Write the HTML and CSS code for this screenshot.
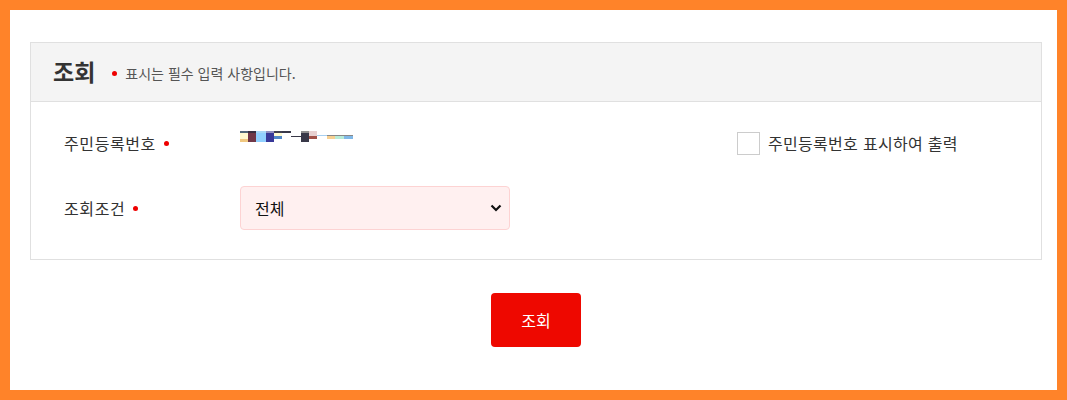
FILE: index.html
```html
<!DOCTYPE html>
<html lang="ko">
<head>
  <meta charset="UTF-8">
  <title>조회</title>
  <link rel="stylesheet" href="styles.css">
</head>
<body>
  <div class="frame">
    <div class="panel">
      <div class="panel-head">
        <h2>조회</h2>
        <span class="note"><i class="dot"></i>표시는 필수 입력 사항입니다.</span>
      </div>

      <div class="panel-body">
        <div class="row">
          <label class="label">주민등록번호<i class="dot"></i></label>
          <div class="value">
            <svg class="masked" width="113" height="11" viewBox="0 0 113 11">
              <rect x="0" y="0" width="8" height="2" fill="#506878"/>
              <rect x="0" y="2" width="8" height="6" fill="#fffbd0"/>
              <rect x="0" y="8" width="8" height="3" fill="#f0c880"/>
              <rect x="8" y="0" width="8" height="2" fill="#383040"/>
              <rect x="8" y="2" width="8" height="9" fill="#703848"/>
              <rect x="16" y="0" width="10" height="2" fill="#a8d8f8"/>
              <rect x="16" y="2" width="10" height="9" fill="#90d0ff"/>
              <rect x="26" y="0" width="8" height="2" fill="#9090c0"/>
              <rect x="26" y="2" width="8" height="9" fill="#383898"/>
              <rect x="34" y="0" width="8" height="2" fill="#404050"/>
              <rect x="34" y="2" width="8" height="3" fill="#fffad0"/>
              <rect x="34" y="5" width="8" height="3" fill="#5088c8"/>
              <rect x="42" y="0" width="9" height="2" fill="#383848"/>
              <rect x="51" y="5" width="10" height="1" fill="#383848"/>
              <rect x="61" y="0" width="8" height="2" fill="#909090"/>
              <rect x="61" y="2" width="8" height="9" fill="#383848"/>
              <rect x="69" y="0" width="8" height="5" fill="#e8d0d0"/>
              <rect x="69" y="5" width="8" height="3" fill="#a05048"/>
              <rect x="77" y="4" width="10" height="1" fill="#a8d0f0"/>
              <rect x="87" y="4" width="26" height="1" fill="#888888"/>
              <rect x="87" y="5" width="8" height="3" fill="#f8d090"/>
              <rect x="95" y="5" width="9" height="3" fill="#b8ecd8"/>
              <rect x="104" y="5" width="9" height="3" fill="#80b8e8"/>
            </svg>
          </div>
          <label class="check">
            <input type="checkbox">
            <span>주민등록번호 표시하여 출력</span>
          </label>
        </div>

        <div class="row">
          <label class="label">조회조건<i class="dot"></i></label>
          <div class="value">
            <div class="select-wrap">
              <select class="select">
                <option>전체</option>
              </select>
              <svg class="chevron" width="12" height="8" viewBox="0 0 12 8">
                <path d="M1.5 1.5 L6 6 L10.5 1.5" fill="none" stroke="#111" stroke-width="2.2"/>
              </svg>
            </div>
          </div>
        </div>
      </div>
    </div>

    <div class="actions">
      <button type="button" class="btn">조회</button>
    </div>
  </div>
</body>
</html>
```

FILE: styles.css
```css
* {
  box-sizing: border-box;
}

body {
  margin: 0;
  font-family: "Noto Sans CJK KR", "Noto Sans", sans-serif;
  color: #333;
}

.frame {
  width: 1067px;
  height: 400px;
  border: 10px solid #ff8329;
  background-color: #fff;
  padding: 32px 15px 0 20px;
}

.panel {
  width: 1012px;
  border: 1px solid #e0e0e0;
}

.panel-head {
  display: flex;
  align-items: center;
  height: 59px;
  padding: 0 22px;
  background-color: #f4f4f4;
  border-bottom: 1px solid #e0e0e0;
}

h2 {
  margin: 0 17px 0 0;
  font-size: 23px;
  font-weight: bold;
  color: #333;
  position: relative;
  top: -1px;
}

.note {
  display: flex;
  align-items: center;
  font-size: 14px;
  color: #555;
  position: relative;
  top: 1px;
}

.dot {
  display: inline-block;
  width: 5px;
  height: 5px;
  border-radius: 50%;
  background-color: #ee0000;
}

.note .dot {
  margin-right: 8px;
}

.panel-body {
  padding: 19px 0 29px 33px;
  display: flex;
  flex-direction: column;
  gap: 21px;
}

.row {
  display: flex;
  align-items: center;
  height: 44px;
}

.label {
  display: flex;
  align-items: center;
  width: 176px;
  font-size: 16px;
  letter-spacing: 0.6px;
  color: #333;
}

.label .dot {
  margin-left: 8px;
}

.value {
  width: 497px;
  display: flex;
  align-items: center;
}

.masked {
  display: block;
  position: relative;
  top: -7px;
}

.check {
  display: flex;
  align-items: center;
  font-size: 16px;
  letter-spacing: 0.3px;
  color: #333;
}

.check input {
  appearance: none;
  width: 23px;
  height: 23px;
  margin: 0 8px 0 0;
  border: 1px solid #ccc;
  background-color: #fff;
}

.select-wrap {
  position: relative;
  width: 270px;
}

.select {
  appearance: none;
  width: 100%;
  height: 44px;
  padding: 0 14px;
  font-family: inherit;
  font-size: 16px;
  color: #111;
  background-color: #fff0f0;
  border: 1px solid #fdd3d3;
  border-radius: 4px;
  outline: none;
}

.chevron {
  position: absolute;
  right: 8px;
  top: 18px;
  pointer-events: none;
}

.actions {
  display: flex;
  justify-content: center;
  width: 1012px;
  margin-top: 33px;
}

.btn {
  width: 90px;
  height: 54px;
  border: none;
  border-radius: 4px;
  background-color: #ee0800;
  color: #fff;
  font-family: inherit;
  font-size: 16px;
  cursor: pointer;
}
```
